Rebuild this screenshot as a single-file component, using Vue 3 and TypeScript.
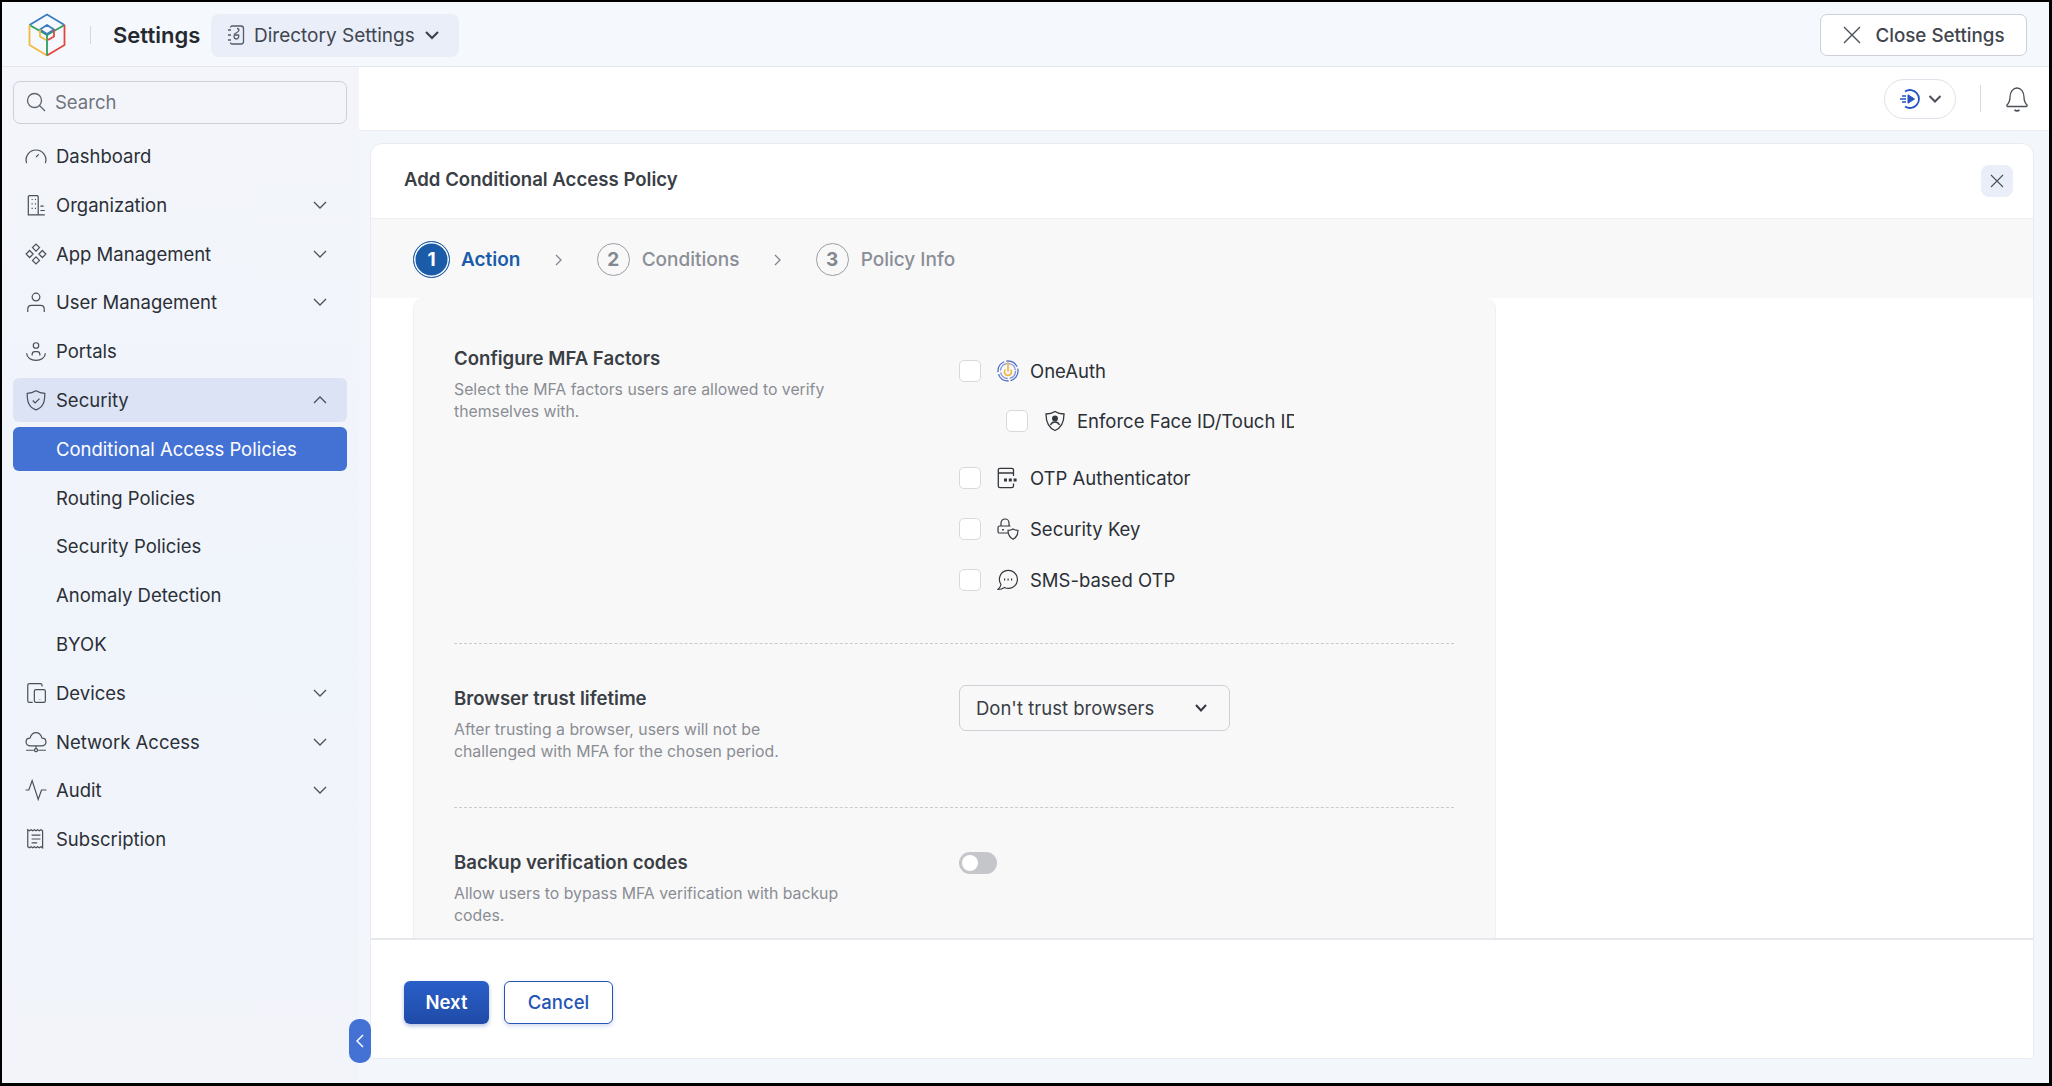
<template>
  <div class="frame">
    <header class="topbar">
      <svg class="logo" viewBox="0 0 38 44" fill="none" stroke-width="1.800" stroke-linejoin="round">
        <path d="M1.500 12 19 1.500 36.500 12" stroke="#3b7cc0" />
        <path d="M1.500 12 19 22 36.500 12" stroke="#2f9e5b" />
        <path d="M1.500 12v20L19 42.500" stroke="#f2b843" />
        <path d="M36.500 12v20L19 42.500" stroke="#e0483e" />
        <path d="M19 22v20.500" stroke="#2f9e5b" />
        <path d="M12 16.500l7-4.500 7 4.500-7 4.500z" stroke="#3b7cc0" />
        <path d="M12 16.500v7l6 3.500" stroke="#f2b843" />
        <path d="M26 16.500v7l-6 3.500" stroke="#e0483e" />
      </svg>
      <span class="logo-sep"></span>
      <span class="app-title">Settings</span>
      <button class="dir-pill">
        <svg width="20" height="22" viewBox="0 0 20 22" fill="none" stroke="#555b66" stroke-width="1.300">
          <path d="M4.500 3.500c0-1 .8-1.500 1.500-1.500h9c1.400 0 2.500 1 2.500 2.500v13c0 1.500-1.100 2.500-2.500 2.500H6c-.8 0-1.500-.5-1.500-1.500" />
          <path d="M2 6h3M2 11h3M2 16h3" />
          <path d="M8 10.500c1-1.500 5-2 5-4.500 0-1-1-1.500-2-1.500M8.500 11h4c.5 0 .5 4-2 4s-3-2.500-2-4z" />
        </svg>
        <span>Directory Settings</span>
        <svg width="18" height="18" viewBox="0 0 18 18" fill="none" stroke="#3c4149" stroke-width="2.200"><path d="M3 6l6 6 6-6" /></svg>
      </button>
      <button class="close-settings">
        <svg width="20" height="20" viewBox="0 0 20 20" fill="none" stroke="#4a4f58" stroke-width="1.400"><path d="M2 2l16 16M18 2 2 18" /></svg>
        <span>Close Settings</span>
      </button>
    </header>

    <div class="body">
      <aside class="sidebar">
        <label class="search">
          <svg width="20" height="20" viewBox="0 0 20 20" fill="none" stroke="#5d636e" stroke-width="1.300">
            <circle cx="8.500" cy="8.500" r="7" /><path d="M13.500 13.500 19 19" />
          </svg>
          <span>Search</span>
        </label>
        <nav class="nav">
          <a
            v-for="item in navItems"
            :key="item.label"
            class="nav-row"
            :class="{ open: item.open, active: item.active }"
          >
            <svg v-if="item.icon" class="nav-icon" viewBox="0 0 20 20" fill="none" stroke="#4a4f58" stroke-width="1.100">
              <path :d="item.icon" />
            </svg>
            <span class="nav-label" :class="{ sub: !item.icon }">{{ item.label }}</span>
            <svg v-if="item.caret" class="nav-caret" :class="{ flip: item.open }" viewBox="0 0 14 8" fill="none" stroke="#4a4f58" stroke-width="1.300">
              <path d="M1 1l6 6 6-6" />
            </svg>
          </a>
        </nav>
      </aside>
      <button class="collapse">
        <svg width="8" height="14" viewBox="0 0 8 14" fill="none" stroke="#fff" stroke-width="1.500"><path d="M7 1 1 7l6 6" /></svg>
      </button>

      <main class="main">
        <div class="subbar">
          <button class="whats-new">
            <svg width="22" height="22" viewBox="0 0 22 22" fill="none" stroke="#2455c3" stroke-width="1.800">
              <path d="M6 3.500A9 9 0 1 1 6 18.500" />
              <path d="M9 6.800v8.400l6.500-4.200z" fill="#2455c3" stroke-width="1" />
              <path d="M3 8h4M1 11h6M3 14h4" stroke-width="1.500" />
            </svg>
            <svg width="14" height="10" viewBox="0 0 14 10" fill="none" stroke="#4a4f58" stroke-width="2"><path d="M1.500 2 7 7.500 12.500 2" /></svg>
          </button>
          <span class="subbar-sep"></span>
          <svg class="bell" viewBox="0 0 24 26" fill="none" stroke="#4a4f58" stroke-width="1.300">
            <path d="M2 19c2-2 3-3.500 3-8 0-5 3-9 7-9s7 4 7 9c0 4.500 1 6 3 8 .5.500 0 1.500-.8 1.500H2.800C2 20.500 1.500 19.500 2 19z" />
            <path d="M9.500 24c1.500 1 3.500 1 5 0" stroke-width="1.600" />
          </svg>
        </div>

        <section class="card">
          <div class="card-head">
            <h1>Add Conditional Access Policy</h1>
            <button class="card-close">
              <svg width="14" height="14" viewBox="0 0 14 14" fill="none" stroke="#4a4f58" stroke-width="1.100"><path d="M1 1l12 12M13 1 1 13" /></svg>
            </button>
          </div>
          <div class="stepper">
            <template v-for="(step, i) in steps" :key="step">
              <svg v-if="i > 0" class="step-arrow" viewBox="0 0 7 12" fill="none" stroke="#80858e" stroke-width="1.300"><path d="M1 1l5 5-5 5" /></svg>
              <span class="step" :class="{ current: i === 0 }">
                <span class="step-num">{{ i + 1 }}</span>
                <span class="step-label">{{ step }}</span>
              </span>
            </template>
          </div>
          <div class="scroller">
            <div class="panel">
              <div class="setting mfa">
                <div class="setting-text">
                  <h2>Configure MFA Factors</h2>
                  <p>Select the MFA factors users are allowed to verify themselves with.</p>
                </div>
                <div class="factors">
                  <div class="factor first">
                    <span class="check"></span>
                    <svg class="factor-icon" viewBox="0 0 22 22" fill="none" stroke-width="1.300">
                      <circle cx="11" cy="11" r="10" stroke="#4f6fc9" stroke-dasharray="13 2" />
                      <circle cx="11" cy="11" r="7.500" stroke="#7f93d8" stroke-dasharray="10 2" />
                      <path d="M11 1.500v10M8.500 9.500a3.500 3.500 0 1 0 5 0" stroke="#eeb338" stroke-width="1.600" />
                    </svg>
                    <span>OneAuth</span>
                  </div>
                  <div class="factor nested">
                    <span class="check"></span>
                    <svg class="factor-icon" viewBox="0 0 22 22" fill="none" stroke="#33373e" stroke-width="1.300">
                      <path d="M11 1.500c3 2 6 2.500 9 2.500 0 8-2 13.500-9 16.500C4 17.500 2 12 2 4c3 0 6-.5 9-2.500z" />
                      <circle cx="11" cy="8.500" r="2.300" fill="#33373e" />
                      <path d="M6.500 15c1-2.500 2.500-3 4.500-3s3.500.5 4.500 3" />
                    </svg>
                    <span class="clipped">Enforce Face ID/Touch ID</span>
                  </div>
                  <div class="factor">
                    <span class="check"></span>
                    <svg class="factor-icon" viewBox="0 0 22 22" fill="none" stroke="#33373e" stroke-width="1.300">
                      <path d="M16.500 9V3c0-1-.7-1.700-1.700-1.700H3C2 1.300 1.300 2 1.300 3v16c0 1 .7 1.700 1.700 1.700h11.800c1 0 1.700-.7 1.700-1.700v-2.500M1.300 6h15" />
                      <path d="M7 13h14" stroke-width="3" stroke-dasharray="3 1.800" />
                    </svg>
                    <span>OTP Authenticator</span>
                  </div>
                  <div class="factor">
                    <span class="check"></span>
                    <svg class="factor-icon" viewBox="0 0 22 22" fill="none" stroke="#33373e" stroke-width="1.200">
                      <path d="M4 8V5a4 4 0 0 1 8 0v3M11 15H2.500C1.600 15 1 14.400 1 13.500v-4C1 8.600 1.600 8 2.500 8h11" />
                      <path d="M6 11v1.500" stroke-width="1.800" />
                      <path d="M16 11c1.500 1 3 1.300 5 1.300 0 4-1 7-5 9-4-2-5-5-5-9 2 0 3.500-.3 5-1.300z" />
                    </svg>
                    <span>Security Key</span>
                  </div>
                  <div class="factor">
                    <span class="check"></span>
                    <svg class="factor-icon" viewBox="0 0 22 22" fill="none" stroke="#33373e" stroke-width="1.200">
                      <path d="M4 15.500A9 9 0 1 1 7.500 18.500C5.500 20 3.500 20.500 1 20.500c1.500-1.500 2.700-3 3-5z" />
                      <path d="M7 10.500h1.200M10.500 10.500h1.200M14 10.500h1.200" stroke-width="1.800" />
                    </svg>
                    <span>SMS-based OTP</span>
                  </div>
                </div>
              </div>

              <div class="setting trust">
                <div class="setting-text">
                  <h2>Browser trust lifetime</h2>
                  <p>After trusting a browser, users will not be challenged with MFA for the chosen period.</p>
                </div>
                <button class="select">
                  <span>Don't trust browsers</span>
                  <svg width="14" height="10" viewBox="0 0 14 10" fill="none" stroke="#33373e" stroke-width="2"><path d="M2 2l5 5.500L12 2" /></svg>
                </button>
              </div>

              <div class="setting backup">
                <div class="setting-text">
                  <h2>Backup verification codes</h2>
                  <p>Allow users to bypass MFA verification with backup codes.</p>
                </div>
                <span class="toggle"><span class="knob"></span></span>
              </div>
            </div>
          </div>
          <div class="card-foot">
            <button class="btn-next">Next</button>
            <button class="btn-cancel">Cancel</button>
          </div>
        </section>
      </main>
    </div>
  </div>
</template>

<script setup lang="ts">
interface NavItem {
  label: string;
  icon?: string;
  caret?: boolean;
  open?: boolean;
  active?: boolean;
}

const steps = ['Action', 'Conditions', 'Policy Info'];

const navItems: NavItem[] = [
  { label: 'Dashboard', icon: 'M1.500 16.500a9 9 0 1 1 17 0M10 11l2.500-2.500' },
  {
    label: 'Organization',
    icon: 'M3 19V2.500c0-.6.4-1 1-1h7c.6 0 1 .4 1 1V19zM12 19h6M14 11h3M14 15h4M6 5h1M9 5h1M6 9h1M9 9h1M6 13h1M9 13h1',
    caret: true,
  },
  {
    label: 'App Management',
    icon: 'M10 1 13.200 4.200 10 7.400 6.800 4.200zM15.800 6.800 19 10 15.800 13.200 12.600 10zM4.200 6.800 7.400 10 4.200 13.200 1 10zM10 12.600 13.200 15.800 10 19 6.800 15.800z',
    caret: true,
  },
  {
    label: 'User Management',
    icon: 'M10 9a3.500 3.500 0 1 0 0-7 3.500 3.500 0 0 0 0 7zM2.500 19v-2.500c0-2 1.500-3.500 3.500-3.500h8c2 0 3.500 1.500 3.500 3.500V19',
    caret: true,
  },
  {
    label: 'Portals',
    icon: 'M10 7.500a2.500 2.500 0 1 0 0-5 2.500 2.500 0 0 0 0 5zM6.500 14v-1c0-1.600 1-2.500 2.500-2.500h2c1.500 0 2.500.9 2.500 2.500v1M1.500 12c0 4 4 6.500 8.500 6.500s8.500-2.500 8.500-6.500',
  },
  {
    label: 'Security',
    icon: 'M10 1.500c2.500 1.500 5 2.300 8 2.500 0 7-1 12.500-8 15C3 16.500 2 11 2 4c3-.2 5.500-1 8-2.500zM7 10.500l2.200 2.200 4-4',
    caret: true,
    open: true,
  },
  { label: 'Conditional Access Policies', active: true },
  { label: 'Routing Policies' },
  { label: 'Security Policies' },
  { label: 'Anomaly Detection' },
  { label: 'BYOK' },
  {
    label: 'Devices',
    icon: 'M15.500 4V3c0-1-.7-1.500-1.500-1.500H4C3 1.500 2.500 2 2.500 3v14c0 1 .5 1.500 1.500 1.500h3M10 7h7c.8 0 1.500.7 1.500 1.500V17c0 .8-.7 1.500-1.500 1.500h-7c-.8 0-1.500-.7-1.500-1.500V8.500C8.500 7.700 9.200 7 10 7zM13.500 15.500v.5',
    caret: true,
  },
  {
    label: 'Network Access',
    icon: 'M5 13.500C2.500 13.500 1 12 1 10c0-2.200 1.700-3.500 3.500-3.500C5.500 3.500 7.500 1.500 10 1.500s4.500 2 5.500 5c1.800 0 3.500 1.300 3.500 3.500 0 2-1.500 3.500-4 3.500zM10 13.500v3M1 17.500h7M12 17.500h7M10 16a1.400 1.400 0 1 1 0 2.800 1.400 1.400 0 0 1 0-2.800z',
    caret: true,
  },
  {
    label: 'Audit',
    icon: 'M.5 10H3.500L6.500 1.500 12 18.500 15 10h4.500',
    caret: true,
  },
  {
    label: 'Subscription',
    icon: 'M2.500 1.500l1.500 1 1.500-1 1.500 1 1.500-1 1.500 1 1.500-1 1.500 1 1.500-1 1.500 1V18l-1.500-1-1.500 1-1.500-1-1.500 1-1.500-1-1.500 1-1.500-1-1.500 1-1.500-1zM6 6.500h8M6 10h8M6 13.500h5',
  },
];
</script>

<style>
html,
body {
  margin: 0;
  background: #000;
}
</style>

<style scoped>
.frame {
  box-sizing: border-box;
  width: 2052px;
  height: 1086px;
  border: solid #000;
  border-width: 2px 3px 3px 2px;
  display: flex;
  flex-direction: column;
  overflow: hidden;
  background: #f3f6fb;
  font-family: Inter, 'Liberation Sans', sans-serif;
  font-size: 18.500px;
  color: #2b2f36;
}

button {
  font: inherit;
  cursor: pointer;
}

.topbar {
  height: 65px;
  flex: none;
  display: flex;
  align-items: center;
  padding: 2px 22px 0 26px;
  box-sizing: border-box;
  background: #f5f8fc;
  border-bottom: 1px solid #e3e6ec;
}

.logo {
  width: 38px;
  height: 44px;
}

.logo-sep {
  width: 1px;
  height: 18px;
  margin: 0 22px 0 24px;
  background: #d5d8de;
}

.app-title {
  font-size: 22px;
  font-weight: 600;
  color: #25282e;
  width: 98px;
}

.dir-pill {
  display: flex;
  align-items: center;
  gap: 8px;
  width: 248px;
  height: 43px;
  padding: 0 15px;
  border: 0;
  border-radius: 8px;
  background: #e9eef9;
  color: #41464f;
  font-size: 19px;
  box-sizing: border-box;
  white-space: nowrap;
}

.close-settings {
  margin-left: auto;
  display: flex;
  align-items: center;
  gap: 13px;
  width: 207px;
  height: 42px;
  justify-content: center;
  box-sizing: border-box;
  background: #fff;
  border: 1px solid #ccd0d7;
  border-radius: 7px;
  color: #41464f;
  font-size: 18.800px;
  font-weight: 500;
}

.body {
  flex: 1;
  display: flex;
  min-height: 0;
  position: relative;
}

.sidebar {
  width: 357px;
  flex: none;
  box-sizing: border-box;
  padding: 14px 12px 0 11px;
  background: linear-gradient(#f3f5fa, #f0f4fb 55%, #f2f4fa);
}

.search {
  display: flex;
  align-items: center;
  gap: 9px;
  height: 43px;
  box-sizing: border-box;
  padding: 0 12px 1px;
  border: 1px solid #cdd0d6;
  border-radius: 7px;
  color: #6e737c;
  margin-bottom: 10px;
}

.nav {
  display: flex;
  flex-direction: column;
  gap: 4.800px;
}

.nav-row {
  height: 44px;
  display: flex;
  align-items: center;
  padding: 0 14px 0 12px;
  border-radius: 6px;
  color: #2b2f36;
}

.nav-row.open {
  background: #dbe3f5;
}

.nav-row.active {
  background: #4472d4;
  color: #fff;
}

.nav-icon {
  width: 22px;
  height: 22px;
  flex: none;
  margin-right: 9px;
}

.nav-label.sub {
  margin-left: 31px;
}

.nav-caret {
  width: 14px;
  height: 8px;
  margin-left: auto;
  margin-right: 6px;
}

.nav-caret.flip {
  transform: rotate(180deg);
}

.collapse {
  position: absolute;
  left: 347px;
  top: 952px;
  width: 22px;
  height: 44px;
  padding: 0;
  border: 0;
  border-radius: 10px;
  background: #4472d4;
  display: flex;
  align-items: center;
  justify-content: center;
}

.main {
  flex: 1;
  min-width: 0;
  display: flex;
  flex-direction: column;
  background: #f3f6fb;
  padding-bottom: 24px;
}

.subbar {
  height: 64px;
  flex: none;
  display: flex;
  align-items: center;
  background: #fff;
  padding: 0 20px 0 0;
  justify-content: flex-end;
  box-sizing: border-box;
  border-bottom: 1px solid #e9ecf2;
}

.whats-new {
  width: 72px;
  height: 40px;
  box-sizing: border-box;
  display: flex;
  align-items: center;
  justify-content: center;
  gap: 7px;
  background: #fff;
  border: 1px solid #dfe2e8;
  border-radius: 20px;
  padding: 0;
}

.subbar-sep {
  width: 1px;
  height: 27px;
  margin: 0 24px 0 24px;
  background: #d5d8de;
}

.bell {
  width: 24px;
  height: 26px;
}

.card {
  flex: 1;
  min-height: 0;
  margin: 12px 15px 0 11px;
  display: flex;
  flex-direction: column;
  background: #fff;
  border: 1px solid #e8ebf1;
  border-radius: 12px 12px 4px 4px;
  overflow: hidden;
}

.card-head {
  height: 75px;
  flex: none;
  box-sizing: border-box;
  display: flex;
  align-items: center;
  justify-content: space-between;
  padding: 0 20px 0 33px;
  border-bottom: 1px solid #eceef2;
}

h1 {
  margin: -5px 0 0;
  font-size: 18.600px;
  font-weight: 600;
  color: #3a3e45;
}

.card-close {
  width: 32px;
  height: 32px;
  border: 0;
  border-radius: 8px;
  background: #e9eef9;
  display: flex;
  align-items: center;
  justify-content: center;
  padding: 0;
}

.stepper {
  height: 79px;
  flex: none;
  box-sizing: border-box;
  display: flex;
  align-items: center;
  padding: 2px 0 0 42px;
  background: #f8f8f9;
  color: #8a8e96;
  font-size: 19px;
  font-weight: 500;
}

.step {
  display: flex;
  align-items: center;
  gap: 12px;
}

.step.current {
  gap: 11px;
}

.step-num {
  box-sizing: border-box;
  width: 33px;
  height: 33px;
  border: 1.500px solid #9a9da4;
  border-radius: 50%;
  display: flex;
  align-items: center;
  justify-content: center;
  font-weight: 700;
  color: #83878f;
}

.step.current .step-num {
  width: 37px;
  height: 37px;
  background: #1a5ca8;
  border: 1.500px solid #1a5ca8;
  box-shadow: inset 0 0 0 1.500px #fff;
  color: #fff;
}

.step.current .step-label {
  color: #1a5ca8;
  font-weight: 600;
}

.step-arrow {
  width: 7px;
  height: 12px;
  margin: 0 34.600px;
}

.scroller {
  flex: 1;
  min-height: 0;
  overflow: hidden;
  padding-left: 42px;
}

.panel {
  width: 1083px;
  box-sizing: border-box;
  padding: 0 41px 0 40px;
  background: #f8f8f9;
  border: 1px solid #eff0f3;
  border-top: 0;
  border-radius: 10px 10px 0 0;
}

.setting {
  display: flex;
}

.setting-text {
  width: 505px;
  flex: none;
}

.setting-text p {
  margin: 0;
  width: 390px;
  font-size: 15.800px;
  line-height: 22px;
  color: #8a8d93;
}

h2 {
  margin: 0 0 9px;
  font-size: 18.600px;
  line-height: 24px;
  font-weight: 600;
  color: #3a3e45;
}

.mfa {
  padding: 48px 0 0;
  height: 346px;
  box-sizing: border-box;
  border-bottom: 1px dashed #c9cbd0;
}

.factors {
  display: flex;
  flex-direction: column;
  padding-top: 13px;
}

.factor {
  display: flex;
  align-items: center;
  height: 24px;
  margin-bottom: 27px;
  white-space: nowrap;
}

.factor.first {
  margin-bottom: 26px;
}

.factor.nested {
  margin-left: 47px;
  margin-bottom: 33px;
}

.check {
  width: 22px;
  height: 22px;
  box-sizing: border-box;
  flex: none;
  background: #fff;
  border: 1px solid #d8d9dd;
  border-radius: 5px;
  margin-right: 16px;
}

.factor-icon {
  width: 22px;
  height: 22px;
  flex: none;
  margin-right: 11px;
}

.clipped {
  display: block;
  width: 217px;
  overflow: hidden;
}

.trust {
  height: 164px;
  box-sizing: border-box;
  padding-top: 42px;
  border-bottom: 1px dashed #c9cbd0;
}

.trust .select {
  margin-top: -1px;
}

.select {
  width: 271px;
  height: 46px;
  box-sizing: border-box;
  display: flex;
  align-items: center;
  justify-content: space-between;
  padding: 0 21px 0 16px;
  background: transparent;
  border: 1px solid #cdd0d6;
  border-radius: 7px;
  color: #3a3e45;
}

.backup {
  height: 140px;
  box-sizing: border-box;
  padding-top: 42px;
}

.toggle {
  width: 38px;
  height: 22px;
  border-radius: 11px;
  background: #c4c6ca;
  position: relative;
  margin-top: 2px;
}

.knob {
  position: absolute;
  left: 3px;
  top: 3px;
  width: 16px;
  height: 16px;
  border-radius: 50%;
  background: #fff;
}

.card-foot {
  height: 120px;
  flex: none;
  box-sizing: border-box;
  display: flex;
  align-items: center;
  gap: 15px;
  padding: 6px 0 0 33px;
  background: #fff;
  border-top: 2px solid #e6e8ec;
}

.btn-next {
  width: 85px;
  height: 43px;
  border: 0;
  border-radius: 6px;
  background: linear-gradient(#2a5fc9, #1f4ba8);
  color: #fff;
  font-weight: 600;
  box-shadow: 0 2px 4px rgba(31, 75, 168, 0.35);
}

.btn-cancel {
  width: 109px;
  height: 43px;
  box-sizing: border-box;
  background: #fff;
  border: 1.500px solid #2455b5;
  border-radius: 6px;
  color: #2455b5;
  font-weight: 500;
  box-shadow: 0 2px 4px rgba(31, 75, 168, 0.2);
}
</style>
